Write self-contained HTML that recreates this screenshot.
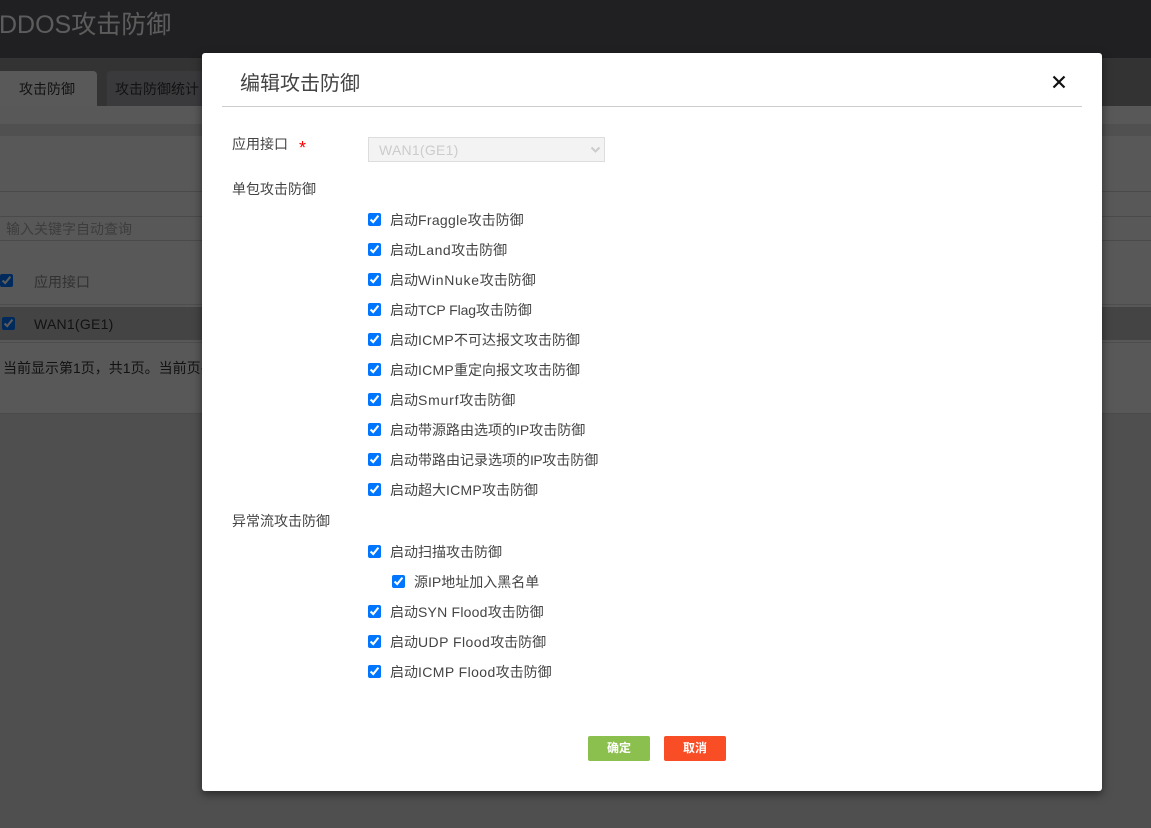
<!DOCTYPE html>
<html lang="zh-CN">
<head>
<meta charset="utf-8">
<title>DDOS攻击防御</title>
<style>
html,body{margin:0;padding:0;width:1151px;height:828px;overflow:hidden;background:#fff}
body{position:relative;font-family:"Liberation Sans","Noto Sans CJK SC",sans-serif;font-size:14px;color:#333}
.a{position:absolute;white-space:nowrap;line-height:20px}
input[type=checkbox]{position:absolute;margin:0;width:13px;height:13px}
.bg{position:absolute;left:0;top:0;width:1151px;height:828px;background:#f3f3f3}
.ov{position:absolute;left:0;top:0;width:1151px;height:828px;background:rgba(0,0,0,.64)}
.modal{position:absolute;left:202px;top:53px;width:900px;height:738px;background:#fff;border-radius:3px;box-shadow:0 3px 9px rgba(0,0,0,.5)}
.t{color:#444}
</style>
</head>
<body>
<div class="bg">
  <div style="position:absolute;left:0;top:0;width:1151px;height:58px;background:#5a5a62"></div>
  <div class="a" style="left:-1px;top:9px;font-size:25px;line-height:32px;color:#fff">DDOS攻击防御</div>
  <div style="position:absolute;left:0;top:58px;width:1151px;height:48px;background:#8f8f8f"></div>
  <div style="position:absolute;left:-10px;top:71px;width:107px;height:35px;background:#f6f6f6;border-radius:4px 4px 0 0"></div>
  <div class="a" style="left:19px;top:79px">攻击防御</div>
  <div style="position:absolute;left:107px;top:71px;width:300px;height:35px;background:#a0a0a8;border-radius:4px 4px 0 0"></div>
  <div class="a" style="left:115px;top:79px">攻击防御统计</div>
  <div style="position:absolute;left:0;top:124px;width:1151px;height:12px;background:#dedede"></div>
  <div style="position:absolute;left:0;top:191px;width:1151px;height:1px;background:#ccc"></div>
  <div style="position:absolute;left:0;top:216px;width:1151px;height:25px;border-top:1px solid #ccc;border-bottom:1px solid #ccc;box-sizing:border-box"></div>
  <div class="a" style="left:6px;top:219px;color:#aaa">输入关键字自动查询</div>
  <input type="checkbox" checked style="left:0;top:274px">
  <div class="a" style="left:34px;top:272px;color:#888">应用接口</div>
  <div style="position:absolute;left:0;top:304px;width:1151px;height:1px;background:#d4d4d4"></div>
  <div style="position:absolute;left:0;top:307px;width:1151px;height:33px;background:#bcbcbc"></div>
  <input type="checkbox" checked style="left:2px;top:317px">
  <div class="a" style="left:34px;top:314px;letter-spacing:.25px">WAN1(GE1)</div>
  <div style="position:absolute;left:0;top:342px;width:1151px;height:1px;background:#d4d4d4"></div>
  <div class="a" style="left:3px;top:358px">当前显示第1页，共1页。当前页共1条记录</div>
  <div style="position:absolute;left:0;top:413px;width:1151px;height:1px;background:#ccc"></div>
  <div style="position:absolute;left:0;top:414px;width:1151px;height:414px;background:#dcdcdc"></div>
</div>
<div class="ov"></div>
<div class="modal"></div>

<div class="a" style="left:240px;top:70px;font-size:20px;line-height:28px;color:#444">编辑攻击防御</div>
<svg style="position:absolute;left:1052px;top:75px" width="14" height="14" viewBox="0 0 14 14"><path d="M1.5 1.5L12.5 12.5M12.5 1.5L1.5 12.5" stroke="#111" stroke-width="2.2" fill="none"/></svg>
<div style="position:absolute;left:222px;top:106px;width:860px;height:1px;background:#ccc"></div>

<div class="a t" style="left:232px;top:134px">应用接口</div>
<div class="a" style="left:299px;top:138px;font-size:18px;color:#f00">*</div>
<div style="position:absolute;left:368px;top:137px;width:237px;height:25px;box-sizing:border-box;background:#f3f3f3;border:1px solid #ddd"></div>
<div class="a" style="left:379px;top:140px;color:#ccc;letter-spacing:.25px">WAN1(GE1)</div>
<svg style="position:absolute;left:590px;top:146px" width="11" height="8" viewBox="0 0 11 8"><path d="M1.5 1.5L5.5 5.5L9.5 1.5" stroke="#ccc" stroke-width="2" fill="none"/></svg>

<div class="a t" style="left:232px;top:179px">单包攻击防御</div>

<input type="checkbox" checked style="left:368px;top:213px"><div class="a t" style="left:390px;top:210px">启动<span style="letter-spacing:.3px">Fraggle</span>攻击防御</div>
<input type="checkbox" checked style="left:368px;top:243px"><div class="a t" style="left:390px;top:240px">启动<span style="letter-spacing:.5px">Land</span>攻击防御</div>
<input type="checkbox" checked style="left:368px;top:273px"><div class="a t" style="left:390px;top:270px">启动<span style="letter-spacing:.7px">WinNuke</span>攻击防御</div>
<input type="checkbox" checked style="left:368px;top:303px"><div class="a t" style="left:390px;top:300px">启动<span style="letter-spacing:-.12px">TCP Flag</span>攻击防御</div>
<input type="checkbox" checked style="left:368px;top:333px"><div class="a t" style="left:390px;top:330px">启动<span style="letter-spacing:.25px">ICMP</span>不可达报文攻击防御</div>
<input type="checkbox" checked style="left:368px;top:363px"><div class="a t" style="left:390px;top:360px">启动<span style="letter-spacing:.25px">ICMP</span>重定向报文攻击防御</div>
<input type="checkbox" checked style="left:368px;top:393px"><div class="a t" style="left:390px;top:390px">启动<span style="letter-spacing:.8px">Smurf</span>攻击防御</div>
<input type="checkbox" checked style="left:368px;top:423px"><div class="a t" style="left:390px;top:420px">启动带源路由选项的IP攻击防御</div>
<input type="checkbox" checked style="left:368px;top:453px"><div class="a t" style="left:390px;top:450px">启动带路由记录选项的<span style="letter-spacing:-.5px">IP</span>攻击防御</div>
<input type="checkbox" checked style="left:368px;top:483px"><div class="a t" style="left:390px;top:480px">启动超大<span style="letter-spacing:.25px">ICMP</span>攻击防御</div>

<div class="a t" style="left:232px;top:511px">异常流攻击防御</div>

<input type="checkbox" checked style="left:368px;top:545px"><div class="a t" style="left:390px;top:542px">启动扫描攻击防御</div>
<input type="checkbox" checked style="left:392px;top:575px"><div class="a t" style="left:414px;top:572px">源IP地址加入黑名单</div>
<input type="checkbox" checked style="left:368px;top:605px"><div class="a t" style="left:390px;top:602px">启动<span style="letter-spacing:.22px">SYN Flood</span>攻击防御</div>
<input type="checkbox" checked style="left:368px;top:635px"><div class="a t" style="left:390px;top:632px">启动<span style="letter-spacing:.44px">UDP Flood</span>攻击防御</div>
<input type="checkbox" checked style="left:368px;top:665px"><div class="a t" style="left:390px;top:662px">启动<span style="letter-spacing:.4px">ICMP Flood</span>攻击防御</div>

<div style="position:absolute;left:588px;top:736px;width:62px;height:25px;background:#8bc04f;border-radius:2px;color:#fff;font-size:12px;line-height:25px;text-align:center;font-weight:bold">确定</div>
<div style="position:absolute;left:664px;top:736px;width:62px;height:25px;background:#f94d25;border-radius:2px;color:#fff;font-size:12px;line-height:25px;text-align:center;font-weight:bold">取消</div>
</body>
</html>
